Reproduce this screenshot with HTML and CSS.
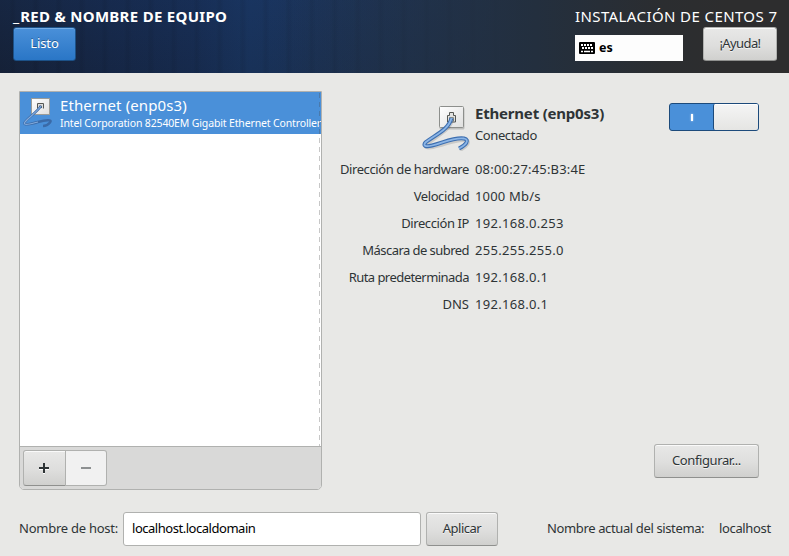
FILE: index.html
```html
<!DOCTYPE html>
<html lang="es">
<head>
<meta charset="utf-8">
<title>Red &amp; nombre de equipo</title>
<link rel="stylesheet" href="styles.css">
</head>
<body>
<svg class="defs" width="0" height="0" aria-hidden="true">
  <defs>
    <linearGradient id="plate" x1="0" y1="0" x2="1" y2="1"><stop offset="0" stop-color="#fff"/><stop offset="1" stop-color="#dfdfde"/></linearGradient>
  </defs>
</svg>
<header class="banner">
  <div class="left">
    <h1>_RED &amp; NOMBRE DE EQUIPO</h1>
    <button class="btn primary"><span>Listo</span></button>
  </div>
  <div class="right">
    <div class="product">INSTALACIÓN DE CENTOS 7</div>
    <div class="tools">
      <div class="keyboard">
        <svg width="16" height="12" viewBox="0 0 16 12"><rect width="16" height="12" rx="1"/><path d="M2 3H14M3 6H14" stroke="#fff" stroke-width="2" stroke-dasharray="2 1"/><path d="M2 9.500H4M5 9.500H11M12 9.500H14" stroke="#fff" stroke-width="1.500"/></svg>
        <b>es</b>
      </div>
      <button class="btn help"><span>¡Ayuda!</span></button>
    </div>
  </div>
</header>
<main>
  <div class="network">
    <section class="devices">
      <div class="list">
        <div class="device">
          <svg class="icon-small" width="32" height="32">
            <rect x="8.500" y="2.500" width="18" height="16" fill="url(#plate)" stroke="#9a9c99"/>
            <path d="M14.500 12.500V7.500H20.500V12.500" fill="#ddd" stroke="#555753"/>
            <path d="M16.500 12V10H18.500V12" fill="none" stroke="#555753"/>
            <path d="M18 10C13 17 7 20 2 26C-1 30 8 28 15 26C22 24 30 23 27 26.500C25 29 22 30 20 30" fill="none" stroke="#3a6aa8" stroke-width="2.400"/>
            <path d="M18 10C13 17 7 20 2 26C-1 30 8 28 15 26" fill="none" stroke="#82aadb" stroke-width="1.200"/>
          </svg>
          <div class="names"><div class="name">Ethernet (enp0s3)</div><div class="desc">Intel Corporation 82540EM Gigabit Ethernet Controller</div></div>
        </div>
      </div>
      <div class="toolbar">
        <button class="add"><svg width="10" height="11"><path d="M0 6H10M5 1V11" stroke="#fff" stroke-width="2"/><path d="M0 5H10M5 0V10" stroke="#2e3436" stroke-width="2"/></svg></button><button class="remove"><svg width="10" height="10"><path d="M0 5H10" stroke="#8d9091" stroke-width="2"/></svg></button>
      </div>
    </section>
    <section class="details">
      <div class="summary">
        <svg class="icon-large" width="48" height="46">
          <rect x="17.500" y="2.500" width="25" height="22" rx="1.500" opacity=".18"/>
          <rect x="17.500" y="1.500" width="24" height="21" rx="1" fill="url(#plate)" stroke="#8d8f8c"/>
          <path d="M25.500 17V10.500H27.500V7.500H31.500V10.500H33.500V17Z" fill="#e3e3e1" stroke="#555753"/>
          <path d="M27.500 16V12.500H31.500V16" fill="#fff" stroke="#888a85"/>
          <path d="M29.500 13C27 24 15 29 4 38C0 41 4 42 10 41C23 38 33 33 42 34C48 35 44 40 37 44" fill="none" stroke="#000" stroke-width="4" opacity=".13" transform="translate(1 1)"/>
          <path d="M29.500 13C27 24 15 29 4 37C0 41 4 42 10 40.500C23 37 33 32 42 33.500C48 35 44 40 37 43.500" fill="none" stroke="#3e6fb0" stroke-width="4"/>
          <path d="M29.500 13C27 24 15 29 4 37C0 41 4 42 10 40.500C23 37 33 32 42 33.500C48 35 44 40 37 43.500" fill="none" stroke="#8bb5e6" stroke-width="1.800"/>
        </svg>
        <div class="state"><h2>Ethernet (enp0s3)</h2><p>Conectado</p></div>
        <div class="switch"><span class="on"><i></i></span><span class="knob"></span></div>
      </div>
      <dl>
        <dt>Dirección de hardware</dt><dd class="wide">08:00:27:45:B3:4E</dd>
        <dt>Velocidad</dt><dd class="wide">1000 Mb/s</dd>
        <dt>Dirección IP</dt><dd>192.168.0.253</dd>
        <dt class="tight">Máscara de subred</dt><dd>255.255.255.0</dd>
        <dt class="tight">Ruta predeterminada</dt><dd>192.168.0.1</dd>
        <dt class="caps">DNS</dt><dd>192.168.0.1</dd>
      </dl>
      <button class="btn configure"><span>Configurar...</span></button>
    </section>
  </div>
  <footer>
    <label class="host-label" for="host">Nombre de host:</label>
    <input id="host" value="localhost.localdomain">
    <button class="btn apply"><span>Aplicar</span></button>
    <span class="current">Nombre actual del sistema:</span>
    <span class="current-name">localhost</span>
  </footer>
</main>
</body>
</html>
```
FILE: styles.css
```css
* { box-sizing: border-box; }
body { margin: 0; width: 789px; height: 556px; overflow: hidden; background: #e8e8e6; color: #2e3436; font: 13px/18px "Noto Sans", sans-serif; }
h1, h2, p, dl, dd { margin: 0; }
.defs { position: absolute; }
button, input { font: inherit; color: inherit; margin: 0; }

.banner {
  height: 73px; display: flex; justify-content: space-between; padding: 6px 12px 0 13px; color: #fff;
  background:
    linear-gradient(90deg, transparent 35%, #232f3e 68%, #2b2d30 84%, #2d2d2e 92%),
    repeating-linear-gradient(90deg, transparent 0 9px, rgba(0, 0, 0, .06) 12px 13px, transparent 17px 23px),
    linear-gradient(rgba(20, 50, 100, .15), rgba(0, 0, 0, .08)),
    linear-gradient(90deg, #17243c 0, #17294a 110px, #182d52 190px, #1a355f 250px, #1c345a 320px, #1e3558 420px, #20365a 100%);
}
h1 { font-size: 15px; line-height: 20px; font-weight: 700; white-space: nowrap; letter-spacing: .3px; }
h1::first-letter { letter-spacing: 1px; }
.product { font-size: 15px; line-height: 20px; white-space: nowrap; letter-spacing: .4px; }
.primary, .help { margin-top: 1px; }
.right { width: 202px; }
.tools { display: flex; justify-content: space-between; }
.keyboard { width: 108px; height: 26px; margin-top: 9px; padding-left: 4px; display: flex; align-items: center; gap: 4px; background: #fdfdfd; color: #000; font-size: 12.5px; }

.btn { flex: none; display: flex; align-items: center; justify-content: center; padding: 0 0 2px; height: 34px; white-space: nowrap; letter-spacing: -.4px; color: #2e3436; border: 1px solid #b0b1af; border-bottom-color: #8f908e; border-radius: 3px; background: linear-gradient(#e8e8e7, #dededd 55%, #d0d0ce); box-shadow: inset 0 1px #fafafa; text-shadow: 0 1px rgba(255, 255, 255, .7); }
.primary { width: 63px; color: #fff; letter-spacing: -.1px; border-color: #1c5187; background: linear-gradient(#4a90d9, #2a76c6); box-shadow: inset 0 1px #76ace4; text-shadow: 0 -1px rgba(0, 0, 0, .35); }
.help { width: 74px; letter-spacing: -.6px; }

main { padding: 18px 18px 0 19px; }
.network { display: flex; height: 399px; }
.devices { width: 303px; border: 1px solid #b0b1af; border-radius: 0 0 5px 5px; overflow: hidden; background: #fff; display: flex; flex-direction: column; }
.list { flex: 1; position: relative; }
.list::after { content: ""; position: absolute; top: 1px; bottom: 0; right: 1px; width: 1px; background: repeating-linear-gradient(rgba(70, 70, 70, .3) 0 5px, transparent 5px 9px); }
.device { height: 42px; display: flex; background: #4a90d9; color: #fff; }
.icon-small { margin: 4px 0 0 3px; flex: none; }
.names { margin: 3px 0 0 5px; white-space: nowrap; }
.name { font-size: 15px; line-height: 20px; letter-spacing: .1px; }
.desc { font-size: 10.5px; line-height: 14px; margin-top: 1px; letter-spacing: -.145px; }
.toolbar { height: 43px; border-top: 1px solid #b0b1af; background: #d9d9d8; padding: 3px; display: flex; }
.add, .remove { height: 36px; padding: 0; border: 1px solid #b0b1af; display: flex; align-items: center; justify-content: center; }
.add { width: 43px; padding-right: 1px; border-radius: 3px 0 0 3px; border-bottom-color: #8f908e; background: linear-gradient(#e8e8e7, #dededd 55%, #d0d0ce); box-shadow: inset 0 1px #fafafa; }
.remove { width: 41px; border-left: 0; border-radius: 0 3px 3px 0; background: #f1f1f1; }

.details { flex: 1; display: flex; flex-direction: column; padding: 12px 12px 12px 18px; }
.summary { display: flex; height: 53px; }
.icon-large { margin: 2px 5px 0 82px; flex: none; }
.state { flex: 1; margin-top: -1px; white-space: nowrap; }
h2 { font-size: 15px; line-height: 22px; font-weight: 700; letter-spacing: -.2px; }
.state p { line-height: 22px; letter-spacing: -.4px; }
.switch { width: 90px; height: 28px; display: flex; border: 1px solid #1c4a7b; border-radius: 3px; background: #4a90d9; }
.on { width: 43px; display: flex; align-items: center; justify-content: center; }
.on i { width: 2px; height: 7px; background: #fff; box-shadow: 0 0 2px #cfe4fa; }
.knob { flex: 1; border-left: 1px solid #1c4a7b; border-radius: 2px; background: linear-gradient(#f5f5f5, #e5e5e3); box-shadow: inset 0 1px #fff; }
dl { display: grid; grid-template-columns: 129px 1fr; column-gap: 6px; grid-auto-rows: 27px; line-height: 27px; white-space: nowrap; }
dt { display: flex; justify-content: flex-end; letter-spacing: -.4px; }
.tight { letter-spacing: -.55px; }
.caps { letter-spacing: 0; }
dd { letter-spacing: .3px; }
.wide { letter-spacing: .18px; }
.configure { width: 105px; margin: auto 0 0 auto; }

footer { display: flex; align-items: center; height: 34px; margin-top: 22px; white-space: nowrap; }
.host-label { width: 104px; flex: none; letter-spacing: -.25px; }
input { flex: none; width: 298px; height: 34px; padding: 0 8px 2px; border: 1px solid #b0b1af; border-radius: 3px; background: #fff; color: #000; letter-spacing: -.47px; }
.apply { width: 72px; margin-left: 5px; letter-spacing: -.5px; }
.current { width: 172px; flex: none; margin-left: 49px; letter-spacing: -.37px; }
.current-name { letter-spacing: -.35px; }
.host-label, .current, .current-name { padding-bottom: 2px; }
```
